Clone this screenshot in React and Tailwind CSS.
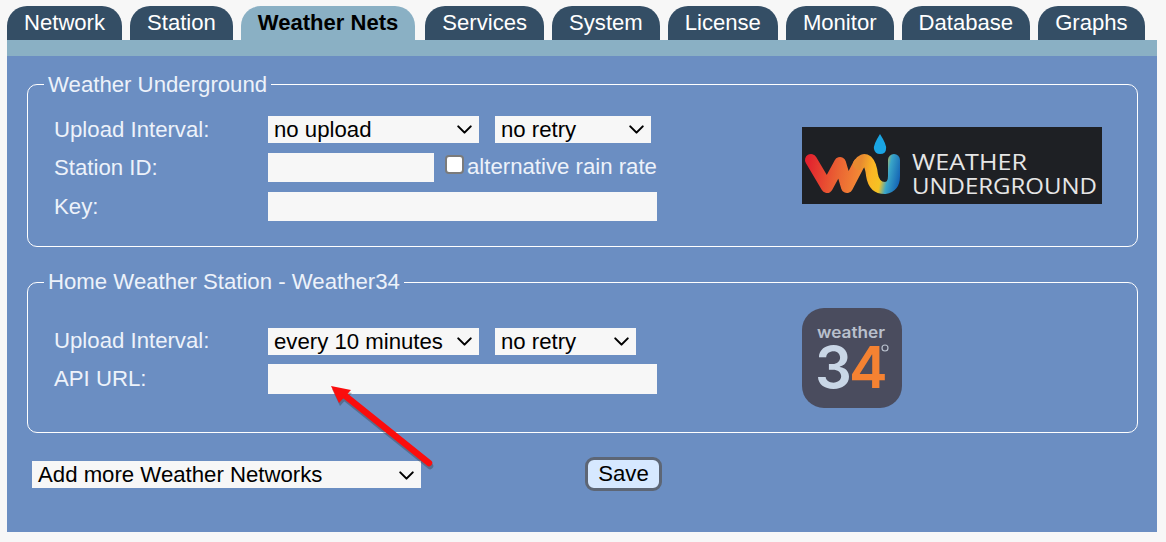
import { ChevronDown } from "lucide-react"

const tabs = ["Network", "Station", "Weather Nets", "Services", "System", "License", "Monitor", "Database", "Graphs"]

const Tab = ({ name, active }) => (
  <div
    className={
      active
        ? "h-[34px] px-[17px] rounded-t-[20px] bg-[#8ab0c4] font-bold text-black text-[22.05px] leading-[33px]"
        : "h-[34px] px-[17px] rounded-t-[20px] bg-[#344e65] text-white text-[22.1px] leading-[33px]"
    }
  >
    {name}
  </div>
)

const Select = ({ value, className }) => (
  <div className={`flex h-[27px] items-center justify-between bg-[#f7f7f7] pl-[6px] pr-[2px] text-black ${className}`}>
    <span className="whitespace-nowrap">{value}</span>
    <ChevronDown size={25} strokeWidth={2} />
  </div>
)

const WuLogo = () => (
  <svg viewBox="0 0 300 77" className="h-[77px] w-[300px] shrink-0">
    <defs>
      <linearGradient id="wu-w" gradientUnits="userSpaceOnUse" x1="4" x2="62" y1="40" y2="50">
        <stop offset="0" stopColor="#e2202e" />
        <stop offset="0.55" stopColor="#ea6333" />
        <stop offset="1" stopColor="#f59035" />
      </linearGradient>
      <linearGradient id="wu-u" gradientUnits="userSpaceOnUse" x1="58" x2="98" y1="40" y2="48">
        <stop offset="0" stopColor="#e88a30" />
        <stop offset="0.3" stopColor="#fbb625" />
        <stop offset="0.55" stopColor="#f5c323" />
        <stop offset="0.72" stopColor="#3aa6c8" />
        <stop offset="1" stopColor="#1566b6" />
      </linearGradient>
    </defs>
    <rect width="300" height="77" fill="#1e2024" />
    <path d="M9 33 L25 60 L38 36 L45 60 L57 37" fill="none" stroke="url(#wu-w)" strokeWidth="12" strokeLinecap="round" strokeLinejoin="round" />
    <path d="M57 37 Q61 31 65 34 Q69 38 70 48 Q72 61 83 61 Q92 60 92 49 L92 33" fill="none" stroke="url(#wu-u)" strokeWidth="12" strokeLinecap="round" />
    <path d="M78 7 Q71 18 72 22 Q73 27 78 27 Q84 27 84 22 Q85 18 78 7Z" fill="#1aa5e3" />
    <text x="110" y="43" fontSize="21" fontWeight="500" fill="#e6e6e6" textLength="115" lengthAdjust="spacingAndGlyphs" className="font-['Open_Sans',sans-serif]">WEATHER</text>
    <text x="110" y="67" fontSize="21" fontWeight="500" fill="#e6e6e6" textLength="185" lengthAdjust="spacingAndGlyphs" className="font-['Open_Sans',sans-serif]">UNDERGROUND</text>
  </svg>
)

const W34Logo = () => (
  <svg viewBox="0 0 100 100" className="h-[100px] w-[100px] shrink-0 font-['Inter',sans-serif]">
    <rect width="100" height="100" rx="22" fill="#4a4c5e" />
    <text x="15" y="30" fontSize="16" fontWeight="600" fill="#b9c0cd" textLength="68" lengthAdjust="spacingAndGlyphs">weather</text>
    <text x="13" y="80" fontSize="58" fontWeight="600" letterSpacing="-3">
      <tspan fill="#c9d6e6">3</tspan>
      <tspan fill="#f58232">4</tspan>
    </text>
    <circle cx="83" cy="40" r="3" fill="none" stroke="#b9c0cd" strokeWidth="1.2" />
  </svg>
)

const Arrow = () => (
  <svg viewBox="0 0 1166 542" className="pointer-events-none absolute left-0 top-0 h-[542px] w-[1166px]">
    <g opacity="0.35" transform="translate(1 3)">
      <path d="M429 463 L343 394" stroke="#333" strokeWidth="6.5" strokeLinecap="round" />
      <path d="M331 386 L351 390 L339 403Z" fill="#333" />
    </g>
    <path d="M429 463 L343 394" stroke="#fb0d0d" strokeWidth="6.5" strokeLinecap="round" />
    <path d="M331 386 L351 390 L339 403Z" fill="#fb0d0d" />
  </svg>
)

export default function App() {
  return (
    <div className="relative h-[542px] w-[1166px] overflow-hidden bg-[#f7f7f7] pl-[7px] pr-[9px] pt-[6px] font-['Liberation_Sans',Arial,sans-serif] text-[22.2px]">
      <div className="flex gap-[8px]">
        {tabs.map((t, i) => (
          <div key={t} className={i === 2 ? "mr-[2px]" : ""}>
            <Tab name={t} active={i === 2} />
          </div>
        ))}
      </div>
      <div className="h-[16px] bg-[#8ab0c4]" />

      <div className="h-[476px] bg-[#6b8ec2] pl-[20px] pr-[19px] pt-[15px] text-[#edf2fa]">
        <fieldset className="h-[176px] rounded-[10px] border border-white pl-[26px]">
          <legend className="-ml-[10px] px-[4px] leading-[26px]">
            <span className="relative top-px">Weather Underground</span>
          </legend>
          <div className="flex pt-[19px]">
            <div className="w-[748px]">
              <div className="flex h-[27px] items-center">
                <span className="w-[214px]">Upload Interval:</span>
                <Select value="no upload" className="w-[211px]" />
                <Select value="no retry" className="ml-[16px] w-[156px]" />
              </div>
              <div className="mt-[10px] flex h-[29px] items-center">
                <span className="w-[214px]">Station ID:</span>
                <div className="h-[29px] w-[166px] bg-[#f7f7f7]" />
                <input type="checkbox" className="mb-[7px] ml-[11px] mr-[3px] h-[19px] w-[19px] appearance-none rounded-[4px] border-2 border-[#7b7b7b] bg-white" />
                <span className="-mt-[2px]">alternative rain rate</span>
              </div>
              <div className="mt-[10px] flex h-[29px] items-center">
                <span className="w-[214px]">Key:</span>
                <div className="h-[29px] w-[389px] bg-[#f7f7f7]" />
              </div>
            </div>
            <div className="pt-[11px]">
              <WuLogo />
            </div>
          </div>
        </fieldset>

        <fieldset className="mt-[22px] h-[164px] rounded-[10px] border border-white pl-[26px]">
          <legend className="-ml-[10px] px-[4px] leading-[26px]">Home Weather Station - Weather34</legend>
          <div className="flex pt-[33px]">
            <div className="w-[748px]">
              <div className="flex h-[27px] items-center">
                <span className="-mt-[2px] w-[214px]">Upload Interval:</span>
                <Select value="every 10 minutes" className="w-[211px]" />
                <Select value="no retry" className="ml-[16px] w-[141px]" />
              </div>
              <div className="mt-[9px] flex h-[30px] items-center">
                <span className="w-[214px]">API URL:</span>
                <div className="h-[30px] w-[389px] bg-[#f7f7f7]" />
              </div>
            </div>
            <div className="-mt-[20px]">
              <W34Logo />
            </div>
          </div>
        </fieldset>

        <div className="mt-[24px] flex items-center pl-[5px]">
          <Select value="Add more Weather Networks" className="w-[389px] pt-[2px]" />
          <button className="ml-[164px] h-[34px] w-[77px] rounded-[9px] border-[3px] border-[#5d6675] bg-[#d6e8ff] pb-[1px] leading-[26px] text-black">Save</button>
        </div>
      </div>

      <Arrow />
    </div>
  )
}
